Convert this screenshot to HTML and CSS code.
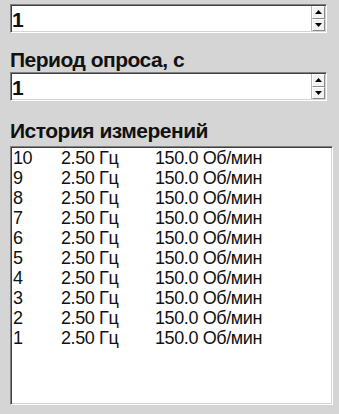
FILE: index.html
```html
<!DOCTYPE html>
<html lang="ru">
<head>
<meta charset="utf-8">
<title>Настройки опроса</title>
<link rel="stylesheet" href="styles.css">
</head>
<body>
<div class="panel">
  <div class="spin spin-first">
    <span class="spin-value">1</span>
    <div class="spin-buttons">
      <div class="spin-btn"><svg width="7" height="4" viewBox="0 0 7 4"><polygon points="0,4 3.5,0 7,4" fill="#000"/></svg></div>
      <div class="spin-btn"><svg width="7" height="4" viewBox="0 0 7 4"><polygon points="0,0 7,0 3.5,4" fill="#000"/></svg></div>
    </div>
  </div>

  <div class="label label-period">Период опроса, с</div>
  <div class="spin">
    <span class="spin-value">1</span>
    <div class="spin-buttons">
      <div class="spin-btn"><svg width="7" height="4" viewBox="0 0 7 4"><polygon points="0,4 3.5,0 7,4" fill="#000"/></svg></div>
      <div class="spin-btn"><svg width="7" height="4" viewBox="0 0 7 4"><polygon points="0,0 7,0 3.5,4" fill="#000"/></svg></div>
    </div>
  </div>

  <div class="label label-history">История измерений</div>
  <div class="list">
    <div class="row"><span>10</span><span>2.50 Гц</span><span>150.0 Об/мин</span></div>
    <div class="row"><span>9</span><span>2.50 Гц</span><span>150.0 Об/мин</span></div>
    <div class="row"><span>8</span><span>2.50 Гц</span><span>150.0 Об/мин</span></div>
    <div class="row"><span>7</span><span>2.50 Гц</span><span>150.0 Об/мин</span></div>
    <div class="row"><span>6</span><span>2.50 Гц</span><span>150.0 Об/мин</span></div>
    <div class="row"><span>5</span><span>2.50 Гц</span><span>150.0 Об/мин</span></div>
    <div class="row"><span>4</span><span>2.50 Гц</span><span>150.0 Об/мин</span></div>
    <div class="row"><span>3</span><span>2.50 Гц</span><span>150.0 Об/мин</span></div>
    <div class="row"><span>2</span><span>2.50 Гц</span><span>150.0 Об/мин</span></div>
    <div class="row"><span>1</span><span>2.50 Гц</span><span>150.0 Об/мин</span></div>
  </div>
</div>
</body>
</html>
```

FILE: styles.css
```css
html, body {
  margin: 0;
  padding: 0;
  background: #d5d5d5;
}

body {
  width: 339px;
  height: 414px;
  overflow: hidden;
  font-family: "Liberation Sans", Arial, sans-serif;
  color: #111;
}

.panel {
  padding: 4px 0 0 10px;
  display: flex;
  flex-direction: column;
  align-items: flex-start;
}

.spin {
  box-sizing: border-box;
  width: 317px;
  height: 29px;
  display: flex;
  align-items: stretch;
  background: #fff;
  border: 1px solid;
  border-color: #808080 #ffffff #ffffff #808080;
  padding: 1px;
  box-shadow: inset 1px 1px 0 #404040, inset -1px -1px 0 #d4d4d4;
}

.spin-value {
  flex: 1;
  font-size: 21px;
  font-weight: bold;
  line-height: 23px;
  padding-top: 2px;
}

.spin-buttons {
  width: 13px;
  display: flex;
  flex-direction: column;
  border-left: 1px solid #b8b8b8;
}

.spin-btn {
  flex: 1;
  box-sizing: border-box;
  display: flex;
  align-items: center;
  justify-content: center;
  background: #f2f2f2;
  border: 1px solid;
  border-color: #ffffff #8a8a8a #8a8a8a #ffffff;
}

.spin-btn svg {
  display: block;
}

.label {
  font-size: 21px;
  font-weight: bold;
  letter-spacing: -0.5px;
  line-height: 24px;
}

.label-period {
  margin-top: 15px;
}

.label-history {
  margin-top: 18px;
}

.list {
  box-sizing: border-box;
  margin-top: 3px;
  width: 323px;
  height: 259px;
  background: #fff;
  border: 1px solid;
  border-color: #808080 #ffffff #ffffff #808080;
  box-shadow: inset 1px 1px 0 #404040, inset -1px -1px 0 #d4d4d4;
  padding: 1px 1px 1px 2px;
  font-size: 18px;
  letter-spacing: -0.4px;
  line-height: 20px;
}

.row {
  display: grid;
  grid-template-columns: 48px 94px auto;
}
```
